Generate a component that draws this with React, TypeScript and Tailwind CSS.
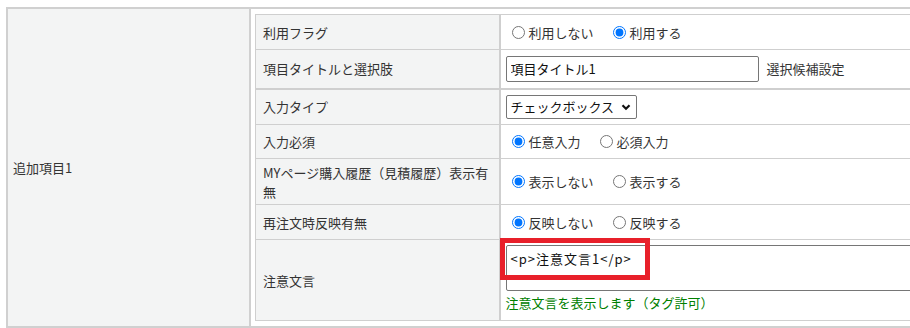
import React from "react";

type Opt = { label: string; checked?: boolean };

function Radios({ name, options }: { name: string; options: Opt[] }) {
  return (
    <div className="flex items-center gap-[13px]">
      {options.map((o) => (
        <label key={o.label} className="flex items-center">
          <input
            type="radio"
            name={name}
            defaultChecked={o.checked}
            className="m-0 ml-[6px] mr-[4px] h-[13px] w-[13px] accent-[#0075ff]"
          />
          <span>{o.label}</span>
        </label>
      ))}
    </div>
  );
}

const labelCell =
  "bg-[#f3f4f4] border border-[#cfcfcf] border-r-2 pl-[7px] pr-[6px] text-left align-middle font-normal w-[244px]";
const valueCell = "border border-[#cfcfcf] pl-[5px] align-middle";

export default function App() {
  return (
    <div
      className="w-[910px] h-[328px] overflow-hidden bg-white text-[13px] leading-[19px] text-[#333]"
      style={{ fontFamily: '"Noto Sans CJK JP", "Noto Sans", sans-serif' }}
    >
      <div className="pt-[7px] pl-[6px]">
        <table className="w-[980px] border-collapse">
          <tbody>
            <tr>
              <th className="w-[243px] bg-[#f3f4f4] border-2 border-[#d0d0d0] pl-[5px] text-left font-normal align-middle">
                追加項目1
              </th>
              <td className="border-2 border-[#d0d0d0] pl-[4px] pt-[5px] pb-[5px]">
                <table className="w-full border-collapse">
                  <tbody>
                    <tr className="h-[35px]">
                      <th className={labelCell}>利用フラグ</th>
                      <td className={valueCell}>
                        <Radios
                          name="use"
                          options={[
                            { label: "利用しない" },
                            { label: "利用する", checked: true },
                          ]}
                        />
                      </td>
                    </tr>
                    <tr className="h-[39px]">
                      <th className={labelCell + " border-b-2"}>
                        項目タイトルと選択肢
                      </th>
                      <td className={valueCell + " border-b-2"}>
                        <div className="flex items-center gap-[8px]">
                          <input
                            type="text"
                            defaultValue="項目タイトル1"
                            className="h-[26px] w-[253px] rounded-[2px] border border-[#767676] px-[4px] text-[13px] text-[#111] outline-none"
                          />
                          <span>選択候補設定</span>
                        </div>
                      </td>
                    </tr>
                    <tr className="h-[36px]">
                      <th className={labelCell}>入力タイプ</th>
                      <td className={valueCell}>
                        <div className="flex h-[24px] w-[131px] items-center justify-between rounded-[2px] border border-[#767676] pl-[4px] pr-[5px] text-[#111]">
                          <span>チェックボックス</span>
                          <svg
                            width="10"
                            height="10"
                            viewBox="0 0 10 10"
                            fill="none"
                            stroke="#111"
                            strokeWidth="2.2"
                          >
                            <path d="M1.5 3.2 5 6.7 8.5 3.2" />
                          </svg>
                        </div>
                      </td>
                    </tr>
                    <tr className="h-[34px]">
                      <th className={labelCell}>入力必須</th>
                      <td className={valueCell}>
                        <Radios
                          name="req"
                          options={[
                            { label: "任意入力", checked: true },
                            { label: "必須入力" },
                          ]}
                        />
                      </td>
                    </tr>
                    <tr className="h-[46px]">
                      <th className={labelCell}>
                        MYページ購入履歴（見積履歴）表示有無
                      </th>
                      <td className={valueCell}>
                        <Radios
                          name="my"
                          options={[
                            { label: "表示しない", checked: true },
                            { label: "表示する" },
                          ]}
                        />
                      </td>
                    </tr>
                    <tr className="h-[35px]">
                      <th className={labelCell}>再注文時反映有無</th>
                      <td className={valueCell}>
                        <Radios
                          name="re"
                          options={[
                            { label: "反映しない", checked: true },
                            { label: "反映する" },
                          ]}
                        />
                      </td>
                    </tr>
                    <tr className="h-[81px]">
                      <th className={labelCell}>注意文言</th>
                      <td className={valueCell + " relative"}>
                        <div className="flex flex-col pt-[5px] pb-[8px]">
                          <textarea
                            defaultValue="<p>注意文言1</p>"
                            className="h-[46px] w-full resize-none rounded-[2px] border border-[#767676] px-[4px] pt-[3px] text-[13px] leading-[19px] tracking-[1px] text-[#111] outline-none"
                          />
                          <span className="mt-[2px] text-[#008000]">
                            注意文言を表示します（タグ許可）
                          </span>
                        </div>
                        <div className="pointer-events-none absolute left-[-1px] top-[-2px] h-[42px] w-[150px] border-[5px] border-[#e8202a]" />
                      </td>
                    </tr>
                  </tbody>
                </table>
              </td>
            </tr>
          </tbody>
        </table>
      </div>
    </div>
  );
}
